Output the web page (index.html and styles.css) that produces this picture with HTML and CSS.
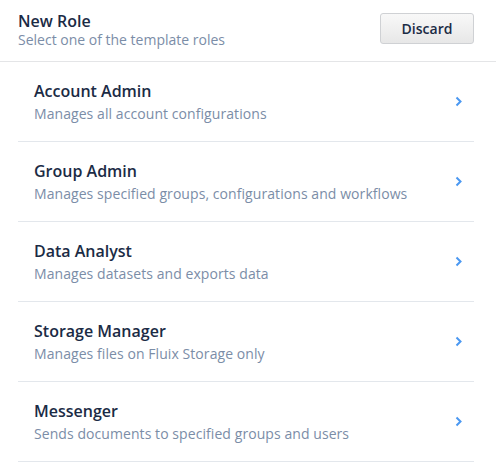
FILE: index.html
```html
<!DOCTYPE html>
<html>
<head>
<meta charset="utf-8">
<link rel="stylesheet" href="styles.css">
</head>
<body>
<div class="panel">
  <header class="header">
    <div class="header-text">
      <div class="title">New Role</div>
      <div class="subtitle">Select one of the template roles</div>
    </div>
    <button class="btn">Discard</button>
  </header>
  <ul class="list">
    <li class="row">
      <div class="row-text">
        <div class="row-title">Account Admin</div>
        <div class="row-desc">Manages all account configurations</div>
      </div>
      <svg class="chev" width="7" height="11" viewBox="0 0 7 11"><path d="M1.5 1.5 L5.5 5.5 L1.5 9.5" fill="none" stroke="#4a98f2" stroke-width="2"/></svg>
    </li>
    <li class="row">
      <div class="row-text">
        <div class="row-title">Group Admin</div>
        <div class="row-desc">Manages specified groups, configurations and workflows</div>
      </div>
      <svg class="chev" width="7" height="11" viewBox="0 0 7 11"><path d="M1.5 1.5 L5.5 5.5 L1.5 9.5" fill="none" stroke="#4a98f2" stroke-width="2"/></svg>
    </li>
    <li class="row">
      <div class="row-text">
        <div class="row-title">Data Analyst</div>
        <div class="row-desc">Manages datasets and exports data</div>
      </div>
      <svg class="chev" width="7" height="11" viewBox="0 0 7 11"><path d="M1.5 1.5 L5.5 5.5 L1.5 9.5" fill="none" stroke="#4a98f2" stroke-width="2"/></svg>
    </li>
    <li class="row">
      <div class="row-text">
        <div class="row-title">Storage Manager</div>
        <div class="row-desc">Manages files on Fluix Storage only</div>
      </div>
      <svg class="chev" width="7" height="11" viewBox="0 0 7 11"><path d="M1.5 1.5 L5.5 5.5 L1.5 9.5" fill="none" stroke="#4a98f2" stroke-width="2"/></svg>
    </li>
    <li class="row">
      <div class="row-text">
        <div class="row-title">Messenger</div>
        <div class="row-desc">Sends documents to specified groups and users</div>
      </div>
      <svg class="chev" width="7" height="11" viewBox="0 0 7 11"><path d="M1.5 1.5 L5.5 5.5 L1.5 9.5" fill="none" stroke="#4a98f2" stroke-width="2"/></svg>
    </li>
  </ul>
</div>
</body>
</html>
```
FILE: styles.css
```css
* { box-sizing: border-box; }
html, body { margin: 0; padding: 0; background: #fff; }
body { font-family: "Open Sans", "Noto Sans", sans-serif; width: 496px; }
.header {
  display: flex;
  justify-content: space-between;
  align-items: flex-start;
  height: 62px;
  padding: 11px 22px 0 18px;
  border-bottom: 1px solid #e4e5e7;
}
.title { font-size: 16px; font-weight: 600; color: #1b2b45; line-height: 20px; }
.subtitle { font-size: 14px; color: #7b8da7; line-height: 18px; }
.btn {
  margin-top: 2px;
  width: 94px;
  height: 31px;
  border: 1px solid #cfd1d4;
  border-radius: 3px;
  background: linear-gradient(#f8f8f8, #e7e7e7);
  font-family: inherit;
  font-size: 14px;
  font-weight: 600;
  color: #1b2b45;
  padding: 0;
}
.list { list-style: none; margin: 0; padding: 0 22px 0 18px; }
.row {
  display: flex;
  align-items: center;
  justify-content: space-between;
  height: 80px;
  padding: 0 12px 0 16px;
  border-bottom: 1px solid #e3e7ec;
}
.row-title { font-size: 16px; font-weight: 600; color: #1b2b45; line-height: 22px; }
.row-desc { font-size: 14px; color: #7b8da7; line-height: 20px; margin-top: 2px; letter-spacing: 0.07px; }
.chev { display: block; }
```
